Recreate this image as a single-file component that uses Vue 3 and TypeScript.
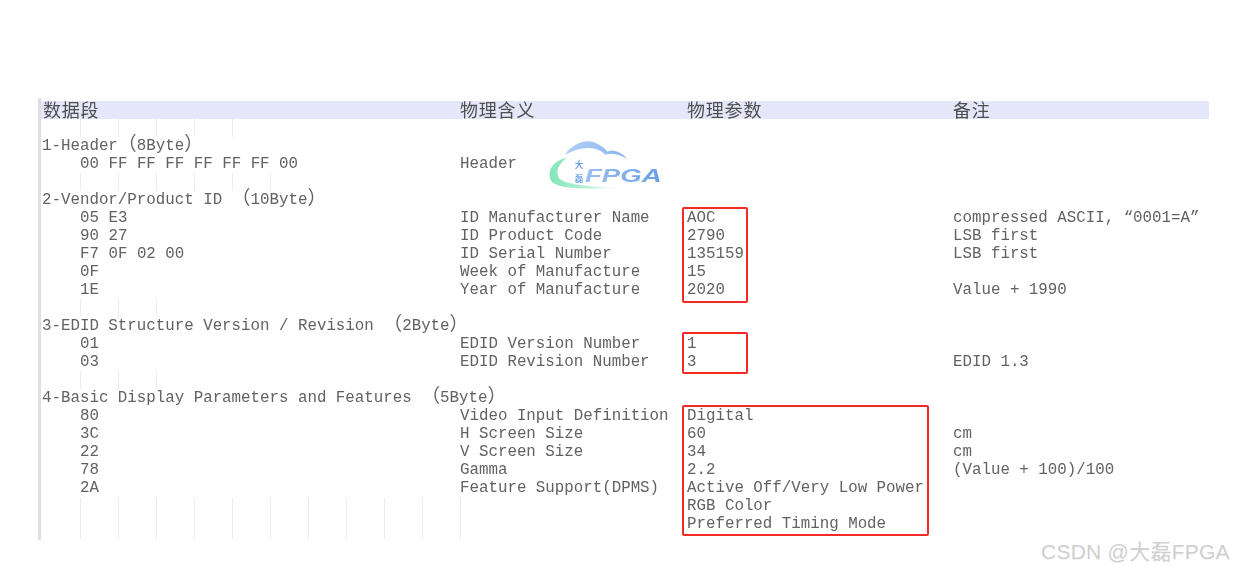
<script setup lang="ts">
interface Row {
  kind: 'guide' | 'section' | 'data'
  a?: string
  wide?: string
  b?: string
  c?: string
  d?: string
  guides?: number
}

const rows: Row[] = [
  { kind: 'guide', guides: 5 },
  { kind: 'section', a: '1-Header', wide: '（', b: '8Byte' },
  { kind: 'data', a: '00 FF FF FF FF FF FF 00', b: 'Header' },
  { kind: 'guide', guides: 6 },
  { kind: 'section', a: '2-Vendor/Product ID ', wide: '（', b: '10Byte' },
  { kind: 'data', a: '05 E3', b: 'ID Manufacturer Name', c: 'AOC', d: 'compressed ASCII, “0001=A”' },
  { kind: 'data', a: '90 27', b: 'ID Product Code', c: '2790', d: 'LSB first' },
  { kind: 'data', a: 'F7 0F 02 00', b: 'ID Serial Number', c: '135159', d: 'LSB first' },
  { kind: 'data', a: '0F', b: 'Week of Manufacture', c: '15' },
  { kind: 'data', a: '1E', b: 'Year of Manufacture', c: '2020', d: 'Value + 1990' },
  { kind: 'guide', guides: 3 },
  { kind: 'section', a: '3-EDID Structure Version / Revision ', wide: '（', b: '2Byte' },
  { kind: 'data', a: '01', b: 'EDID Version Number', c: '1' },
  { kind: 'data', a: '03', b: 'EDID Revision Number', c: '3', d: 'EDID 1.3' },
  { kind: 'guide', guides: 3 },
  { kind: 'section', a: '4-Basic Display Parameters and Features ', wide: '（', b: '5Byte' },
  { kind: 'data', a: '80', b: 'Video Input Definition', c: 'Digital' },
  { kind: 'data', a: '3C', b: 'H Screen Size', c: '60', d: 'cm' },
  { kind: 'data', a: '22', b: 'V Screen Size', c: '34', d: 'cm' },
  { kind: 'data', a: '78', b: 'Gamma', c: '2.2', d: '(Value + 100)/100' },
  { kind: 'data', a: '2A', b: 'Feature Support(DPMS)', c: 'Active Off/Very Low Power' },
  { kind: 'data', c: 'RGB Color' },
  { kind: 'data', c: 'Preferred Timing Mode' },
]

const guideWidth = (n: number): string => `${(n - 1) * 38 + 1}px`
</script>

<template>
  <main class="page">
    <section class="sheet">
      <div class="band">
        <span>数据段</span>
        <span>物理含义</span>
        <span>物理参数</span>
        <span>备注</span>
      </div>

      <template v-for="(row, i) in rows" :key="i">
        <div v-if="row.kind === 'guide'" class="row guide-row">
          <i class="guides" :style="{ width: guideWidth(row.guides ?? 1) }"></i>
        </div>
        <div v-else-if="row.kind === 'section'" class="row section-row">
          <span>{{ row.a }}<b class="wide">{{ row.wide }}</b>{{ row.b }}<b class="wide">）</b></span>
        </div>
        <div v-else class="row">
          <span class="indent">{{ row.a }}</span>
          <span>{{ row.b }}</span>
          <span>{{ row.c }}</span>
          <span>{{ row.d }}</span>
        </div>
      </template>

      <div class="tail"></div>

      <i class="guides tail-guides"></i>
      <div class="mark box-a"></div>
      <div class="mark box-b"></div>
      <div class="mark box-c"></div>

      <svg class="logo" viewBox="0 0 450 210" width="150" height="70" aria-label="大磊FPGA logo">
        <defs>
          <linearGradient id="sky" x1="0" y1="0" x2="1" y2="0.3">
            <stop offset="0" stop-color="#b4cff4" />
            <stop offset="1" stop-color="#8db9f0" />
          </linearGradient>
          <linearGradient id="mint" x1="0" y1="0" x2="1" y2="0">
            <stop offset="0" stop-color="#85e5b9" />
            <stop offset="0.45" stop-color="#aef0d2" />
            <stop offset="1" stop-color="#e8fbf2" stop-opacity="0.3" />
          </linearGradient>
          <linearGradient id="ink" x1="0" y1="0" x2="1" y2="0">
            <stop offset="0" stop-color="#9cc0f0" />
            <stop offset="1" stop-color="#6a9ee6" />
          </linearGradient>
        </defs>
        <path d="M105 90C125 58 170 36 205 58C217 65 226 72 233 80C252 70 276 84 293 103C270 88 246 82 226 89C203 62 150 62 105 90Z" fill="url(#sky)" />
        <path d="M112 98C72 104 50 135 62 165C76 191 140 193 285 190C172 184 106 180 88 160C75 141 85 116 112 98Z" fill="url(#mint)" />
        <text x="134" y="128" class="logo-cjk" fill="#6a9ee6">大</text>
        <text x="134" y="172" class="logo-cjk" fill="#7aa9e8">磊</text>
        <text x="165" y="170" class="logo-latin" fill="url(#ink)" textLength="230" lengthAdjust="spacingAndGlyphs">FPGA</text>
      </svg>
    </section>

    <div class="watermark">CSDN @大磊FPGA</div>
  </main>
</template>

<style scoped>
.page {
  position: relative;
  width: 1234px;
  height: 572px;
  overflow: hidden;
  box-sizing: border-box;
  padding: 98px 25px 0 38px;
  background: #fff;
  color: #626262;
  font-family: "Liberation Mono", "Noto Sans CJK SC", monospace;
  font-size: 15.8px;
}

.sheet {
  position: relative;
  border-left: 3px solid #dedede;
  padding-top: 3px;
  filter: blur(0.35px);
}

.band,
.row {
  display: grid;
  grid-template-columns: 418px 227px 266px 1fr;
  padding-left: 1px;
  white-space: pre;
}

.band {
  height: 18px;
  line-height: 16px;
  background: #e6e6fb;
  font-family: "Noto Sans CJK SC", "Liberation Mono", sans-serif;
  font-size: 18px;
  letter-spacing: 0.8px;
  color: #4f4f4f;
}

.band span:first-child {
  padding-left: 1px;
}

.row {
  height: 18px;
  line-height: 18px;
}

.section-row {
  grid-template-columns: 1fr;
}

.indent {
  padding-left: 38px;
}

.wide {
  font-weight: 400;
  font-size: 18.9px;
  line-height: 0;
  vertical-align: -1px;
}

.guide-row {
  display: block;
}

.guides {
  display: block;
  height: 100%;
  margin-left: 38px;
  background: repeating-linear-gradient(to right, #ececec 0 1px, transparent 1px 38px);
}

.tail {
  height: 7px;
}

.tail-guides {
  position: absolute;
  left: 1px;
  top: 400px;
  width: 381px;
  height: 41px;
}

.mark {
  position: absolute;
  box-sizing: border-box;
  border: 2px solid #f32a25;
  border-radius: 2px;
}

.box-a {
  left: 641px;
  top: 109px;
  width: 66px;
  height: 96px;
}

.box-b {
  left: 641px;
  top: 234px;
  width: 66px;
  height: 42px;
}

.box-c {
  left: 641px;
  top: 307px;
  width: 247px;
  height: 131px;
}

.logo {
  position: absolute;
  left: 489px;
  top: 27px;
}

.logo-cjk {
  font-family: "Noto Sans CJK SC", sans-serif;
  font-size: 26px;
  font-weight: 700;
}

.logo-latin {
  font-family: "Liberation Sans", sans-serif;
  font-size: 54px;
  font-weight: 700;
  font-style: italic;
}

.watermark {
  position: absolute;
  left: 1041px;
  top: 538px;
  font-family: "Liberation Sans", "Noto Sans CJK SC", sans-serif;
  font-size: 21px;
  letter-spacing: 0.25px;
  line-height: 28px;
  white-space: nowrap;
  color: #d0d0d0;
  text-shadow: 0 1px 0 rgba(0, 0, 0, 0.06);
}
</style>
